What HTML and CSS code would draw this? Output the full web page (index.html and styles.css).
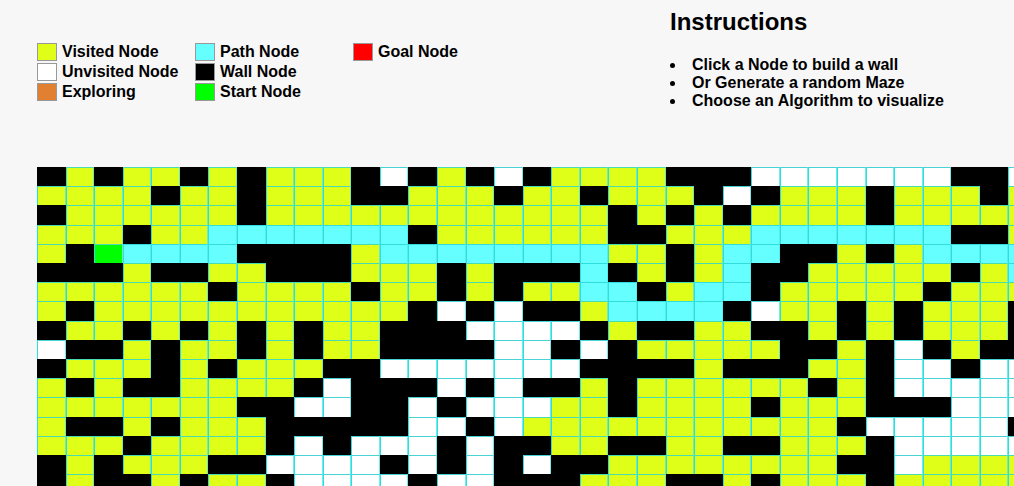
FILE: index.html
```html
<!DOCTYPE html>
<html lang="en">
<head>
<meta charset="utf-8">
<title>Pathfinding Visualizer</title>
<link rel="stylesheet" href="styles.css">
</head>
<body>
<header class="top">
  <ul class="legend">
    <li class="legend-item"><span class="swatch visited"></span>Visited Node</li>
    <li class="legend-item"><span class="swatch unvisited"></span>Unvisited Node</li>
    <li class="legend-item"><span class="swatch exploring"></span>Exploring</li>
    <li class="legend-item"><span class="swatch path"></span>Path Node</li>
    <li class="legend-item"><span class="swatch wall"></span>Wall Node</li>
    <li class="legend-item"><span class="swatch start"></span>Start Node</li>
    <li class="legend-item"><span class="swatch goal"></span>Goal Node</li>
  </ul>
  <section class="instructions">
    <h2 class="instructions-title">Instructions</h2>
    <ul class="instructions-list">
      <li>Click a Node to build a wall</li>
      <li>Or Generate a random Maze</li>
      <li>Choose an Algorithm to visualize</li>
    </ul>
  </section>
</header>
<main class="board" id="board"></main>
<script src="board.js"></script>
</body>
</html>
```
FILE: styles.css
```css
body {
  margin: 0;
  background: #f7f7f7;
  color: #000;
  font: bold 16px/18px "Liberation Sans", Arial, sans-serif;
  overflow: hidden;
}

.top {
  display: grid;
  grid-template-columns: 633px 1fr;
  padding: 0 0 57px 37px;
}

.legend {
  display: grid;
  grid-template-rows: repeat(3, 20px);
  grid-auto-flow: column;
  grid-auto-columns: 158px;
  align-content: start;
  margin: 0;
  padding: 42px 0 0;
  list-style: none;
}

.legend-item {
  display: flex;
  align-items: center;
  gap: 5px;
  white-space: nowrap;
}

.swatch {
  box-sizing: border-box;
  width: 20px;
  height: 18px;
  border: 1px solid #999;
}

.visited { background: #dfff18; }
.unvisited { background: #fff; }
.exploring { background: #e08030; }
.path { background: #66ffff; }
.wall { background: #000; }
.start { background: #00ff00; }
.goal { background: #ff0000; }

.instructions-title {
  margin: 8px 0 20px;
  font-size: 24px;
  line-height: 28px;
}

.instructions-list {
  margin: 0;
  padding: 0;
  list-style: disc inside;
}

.board {
  display: grid;
  grid-template-columns: repeat(35, 1fr);
  grid-template-rows: repeat(25, 1fr);
  width: 1000px;
  height: 480px;
  margin-left: 37px;
}

.cell {
  border: 1px solid #48dcb0;
  border-bottom: 0;
  border-left-color: #28e0d8;
  border-right-color: #70ecb8;
}

.cell.path {
  border-color: #30dcdc;
  border-right-color: #50f0f0;
}

.cell.unvisited {
  border-color: #48d4d4;
  border-left-color: #28e0e0;
  border-right-color: #70ecec;
}

.cell.wall { border-color: #000; }
```
FILE: board.js
```javascript
// One string per row: # wall, v visited, p path, s start, . unvisited
const rows = [
  "#v#vv#v#vvv#.#v#.#vvvv###.......##.",
  "vvvv#vv#vvv##vvv#vv#vvv#.#vvv#vvv#v",
  "#vvvvvv#vvvvvvvvvvvv#v#v#vvvv#vvvvv",
  "vvv#vvppppppp#vvvvvv##vvvppppppp##v",
  "v#spppp####vppppppppvv#vpp##v#vpppp",
  "###v##vv###vvv#v###p#v#vp##vvvvv#vp",
  "vvvvvv#vvvv#vv#v#vvpp#vpp#vvvvv#vvv",
  "v#vvvvvvvvvvv#.#.##vpppp#.vv#v#vvv#",
  "#vv#v#v#v#vv###....#v##vv##v#v#vvv#",
  ".##v#vv#v#vv####..#.#vvvvv##v#.#v##",
  "#vvv#v#vvv##.......####v###vv#..#..",
  "v#v##vvvv#.###.#.##v#vvvvvv#v#.....",
  "vvvvvvv##..##.#...vv#vvvv#vvv###...",
  "v##v#vvv#####..#.vvvvvvvvvvv#.....#",
  "vvv#vvvv#.#...#.##vv##vv##vvv#.....",
  "#v#vvv##....#.#.#.##vvvvvvvv##.vvvv",
  "#v##v#vv#....#..###vvv##v#vvv#vvvvv"
];

const kinds = { "#": "wall", v: "visited", p: "path", s: "start", ".": "unvisited" };
const board = document.getElementById("board");

for (const row of rows) {
  for (const code of row) {
    const cell = document.createElement("div");
    cell.className = "cell " + kinds[code];
    board.append(cell);
  }
}
```
